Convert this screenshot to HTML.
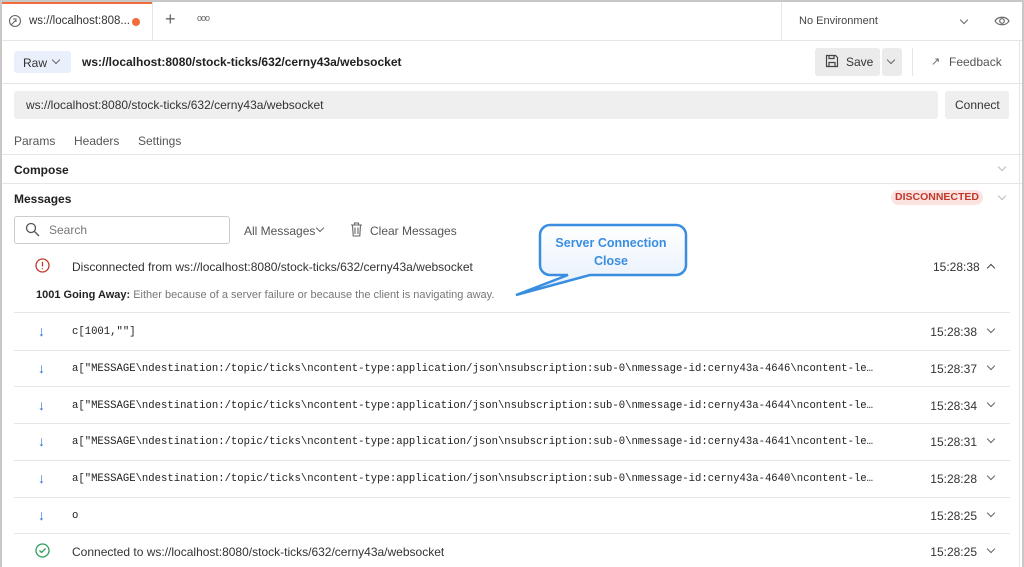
<!DOCTYPE html><html><head><style>
*{box-sizing:border-box;margin:0;padding:0}
body{width:1024px;height:567px;overflow:hidden;background:#fff;font-family:"Liberation Sans",sans-serif;font-size:12px;color:#212121;position:relative}
.frame{position:absolute;inset:0;border:2px solid #c8c8c8;border-bottom:none}
.a{position:absolute}
.hl{position:absolute;height:1px;background:#e6e6e6}
.mono{font-family:"Liberation Mono",monospace;font-size:10.6px}
.chev{position:absolute;width:6px;height:6px;border-right:1.3px solid #666;border-bottom:1.3px solid #666;transform:rotate(45deg)}
.chevu{position:absolute;width:6px;height:6px;border-left:1.3px solid #444;border-top:1.3px solid #444;transform:rotate(45deg)}
.arr{position:absolute;color:#2d6fd6;font-size:14px;font-weight:bold}
.time{position:absolute;right:47px;color:#333}
</style></head><body>
<div class="frame"></div>
<div class="a" style="left:2px;top:2px;width:150px;height:2px;background:#f26b3a"></div>
<div class="a" style="left:152px;top:2px;height:38px;width:1px;background:#e6e6e6"></div>
<svg class="a" style="left:8px;top:14px" width="14" height="14" viewBox="0 0 14 14" fill="none" stroke="#666" stroke-width="1.1"><circle cx="7" cy="7" r="5.5"/><path d="M3 11l5-5M5 5h3v3"/></svg>
<div class="a" style="left:29px;top:15px;color:#333;font-size:11.5px">ws://localhost:808...</div>
<div class="a" style="left:132px;top:18px;width:8px;height:8px;border-radius:50%;background:#f26b3a"></div>
<div class="a" style="left:165px;top:9px;font-size:18px;color:#666">+</div>
<div class="a" style="left:197px;top:13px;color:#666;font-size:9px;letter-spacing:-1px">ooo</div>
<div class="a" style="left:781px;top:2px;height:38px;width:1px;background:#e6e6e6"></div>
<div class="a" style="left:799px;top:15px;color:#444;font-size:11px">No Environment</div>
<div class="chev" style="left:961px;top:17px"></div>
<svg class="a" style="left:994px;top:15px" width="16" height="12" viewBox="0 0 16 12" fill="none" stroke="#666" stroke-width="1.2"><path d="M1 6C4 1 12 1 15 6C12 11 4 11 1 6Z"/><circle cx="8" cy="6" r="2.3"/></svg>
<div class="hl" style="left:2px;right:2px;top:40px"></div>
<div class="a" style="left:14px;top:51px;width:57px;height:22px;background:#e9f0fb;border-radius:3px"></div>
<div class="a" style="left:23px;top:56px;color:#333">Raw</div>
<div class="chev" style="left:53px;top:57px"></div>
<div class="a" style="left:82px;top:55px;font-weight:bold;font-size:12px">ws://localhost:8080/stock-ticks/632/cerny43a/websocket</div>
<div class="a" style="left:815px;top:48px;width:65px;height:28px;background:#ebebeb;border-radius:3px"></div>
<div class="a" style="left:882px;top:48px;width:20px;height:28px;background:#ebebeb;border-radius:3px"></div>
<svg class="a" style="left:825px;top:54px" width="14" height="14" viewBox="0 0 14 14" fill="none" stroke="#444" stroke-width="1.2"><path d="M1.5 1.5h9l2 2v9h-11z M4 1.5v3h5v-3 M4 12.5v-4h6v4"/></svg>
<div class="a" style="left:846px;top:55px;color:#333;font-size:12px">Save</div>
<div class="chev" style="left:888px;top:57px"></div>
<div class="a" style="left:912px;top:48px;height:28px;width:1px;background:#e6e6e6"></div>
<div class="a" style="left:931px;top:55px;color:#666;font-size:11px">↗</div>
<div class="a" style="left:949px;top:55px;color:#555">Feedback</div>
<div class="hl" style="left:2px;right:2px;top:83px"></div>
<div class="a" style="left:14px;top:91px;width:924px;height:28px;background:#efefef;border-radius:3px"></div>
<div class="a" style="left:26px;top:98px;color:#333">ws://localhost:8080/stock-ticks/632/cerny43a/websocket</div>
<div class="a" style="left:945px;top:91px;width:64px;height:28px;background:#efefef;border-radius:3px"></div>
<div class="a" style="left:955px;top:98px;color:#333">Connect</div>
<div class="a" style="left:14px;top:134px;color:#555">Params</div>
<div class="a" style="left:74px;top:134px;color:#555">Headers</div>
<div class="a" style="left:138px;top:134px;color:#555">Settings</div>
<div class="hl" style="left:2px;right:2px;top:154px"></div>
<div class="a" style="left:14px;top:163px;font-weight:bold">Compose</div>
<div class="chev" style="left:999px;top:164px;border-color:#bbb"></div>
<div class="hl" style="left:2px;right:2px;top:183px"></div>
<div class="a" style="left:14px;top:192px;font-weight:bold">Messages</div>
<div class="a" style="left:891px;top:190px;width:92px;height:15px;background:#fbe3e1;border-radius:8px;color:#c0392b;font-size:10.5px;font-weight:bold;text-align:center;line-height:15px">DISCONNECTED</div>
<div class="chev" style="left:999px;top:193px;border-color:#bbb"></div>
<div class="a" style="left:14px;top:216px;width:216px;height:28px;border:1px solid #ccc;border-radius:3px"></div>
<svg class="a" style="left:25px;top:222px" width="15" height="15" viewBox="0 0 15 15" fill="none" stroke="#555" stroke-width="1.3"><circle cx="6" cy="6" r="4.5"/><path d="M9.5 9.5L14 14"/></svg>
<div class="a" style="left:49px;top:223px;color:#777">Search</div>
<div class="a" style="left:244px;top:224px;color:#555">All Messages</div>
<div class="chev" style="left:317px;top:225px"></div>
<svg class="a" style="left:350px;top:222px" width="13" height="15" viewBox="0 0 13 15" fill="none" stroke="#666" stroke-width="1.1"><path d="M1 3h11M4.5 3V1h4v2M2.5 3l.7 11h6.6l.7-11M5 5.5v6.5M8 5.5v6.5"/></svg>
<div class="a" style="left:370px;top:224px;color:#555">Clear Messages</div>
<svg class="a" style="left:35px;top:258px" width="15" height="15" viewBox="0 0 15 15" fill="none" stroke="#c0392b" stroke-width="1.3"><circle cx="7.5" cy="7.5" r="6.5"/><path d="M7.5 3.8v4.7M7.5 10.2v1"/></svg>
<div class="a" style="left:72px;top:260px;color:#333">Disconnected from ws://localhost:8080/stock-ticks/632/cerny43a/websocket</div>
<div class="a" style="left:933px;top:260px;color:#333">15:28:38</div>
<div class="chevu" style="left:988px;top:265px"></div>
<div class="a" style="left:36px;top:289px;font-size:11px;color:#777"><b style="color:#222">1001 Going Away:</b> Either because of a server failure or because the client is navigating away.</div>
<svg class="a" style="left:510px;top:222px" width="180" height="78" viewBox="0 0 180 78"><defs><linearGradient id="g" x1="0" y1="0" x2="0" y2="1"><stop offset="0" stop-color="#fff"/><stop offset="1" stop-color="#e4eefb"/></linearGradient></defs><path d="M40 3h126a10 10 0 0 1 10 10v30a10 10 0 0 1-10 10H80L6 73 58 53H40a10 10 0 0 1-10-10V13A10 10 0 0 1 40 3Z" fill="url(#g)" stroke="#3a8ee0" stroke-width="2.5"/></svg>
<div class="a" style="left:540px;top:234px;width:142px;text-align:center;color:#3a8ee0;font-weight:bold;font-size:12.5px;line-height:18px">Server Connection<br>Close</div>
<div class="hl" style="left:14px;right:14px;top:312px"></div>
<div class="arr" style="left:38px;top:323px">↓</div><div class="a mono" style="left:72px;top:326px">c[1001,""]</div><div class="time" style="top:325px">15:28:38</div><div class="chev" style="left:988px;top:326px"></div>
<div class="hl" style="left:14px;right:14px;top:350px"></div>
<div class="arr" style="left:38px;top:360px">↓</div><div class="a mono" style="left:72px;top:363px">a["MESSAGE\ndestination:/topic/ticks\ncontent-type:application/json\nsubscription:sub-0\nmessage-id:cerny43a-4646\ncontent-le…</div><div class="time" style="top:362px">15:28:37</div><div class="chev" style="left:988px;top:363px"></div>
<div class="hl" style="left:14px;right:14px;top:386px"></div>
<div class="arr" style="left:38px;top:397px">↓</div><div class="a mono" style="left:72px;top:400px">a["MESSAGE\ndestination:/topic/ticks\ncontent-type:application/json\nsubscription:sub-0\nmessage-id:cerny43a-4644\ncontent-le…</div><div class="time" style="top:399px">15:28:34</div><div class="chev" style="left:988px;top:400px"></div>
<div class="hl" style="left:14px;right:14px;top:423px"></div>
<div class="arr" style="left:38px;top:433px">↓</div><div class="a mono" style="left:72px;top:436px">a["MESSAGE\ndestination:/topic/ticks\ncontent-type:application/json\nsubscription:sub-0\nmessage-id:cerny43a-4641\ncontent-le…</div><div class="time" style="top:435px">15:28:31</div><div class="chev" style="left:988px;top:436px"></div>
<div class="hl" style="left:14px;right:14px;top:460px"></div>
<div class="arr" style="left:38px;top:470px">↓</div><div class="a mono" style="left:72px;top:473px">a["MESSAGE\ndestination:/topic/ticks\ncontent-type:application/json\nsubscription:sub-0\nmessage-id:cerny43a-4640\ncontent-le…</div><div class="time" style="top:472px">15:28:28</div><div class="chev" style="left:988px;top:473px"></div>
<div class="hl" style="left:14px;right:14px;top:497px"></div>
<div class="arr" style="left:38px;top:507px">↓</div><div class="a mono" style="left:72px;top:510px">o</div><div class="time" style="top:509px">15:28:25</div><div class="chev" style="left:988px;top:510px"></div>
<div class="hl" style="left:14px;right:14px;top:533px"></div>
<svg class="a" style="left:35px;top:543px" width="15" height="15" viewBox="0 0 15 15" fill="none" stroke="#2e9e5b" stroke-width="1.3"><circle cx="7.5" cy="7.5" r="6.5"/><path d="M4.5 7.5l2 2 4-4"/></svg>
<div class="a" style="left:72px;top:545px;color:#333">Connected to ws://localhost:8080/stock-ticks/632/cerny43a/websocket</div><div class="time" style="top:545px">15:28:25</div><div class="chev" style="left:988px;top:546px"></div>
<div class="a" style="left:1019px;top:40px;width:1px;height:527px;background:#e6e6e6"></div>
</body></html>
